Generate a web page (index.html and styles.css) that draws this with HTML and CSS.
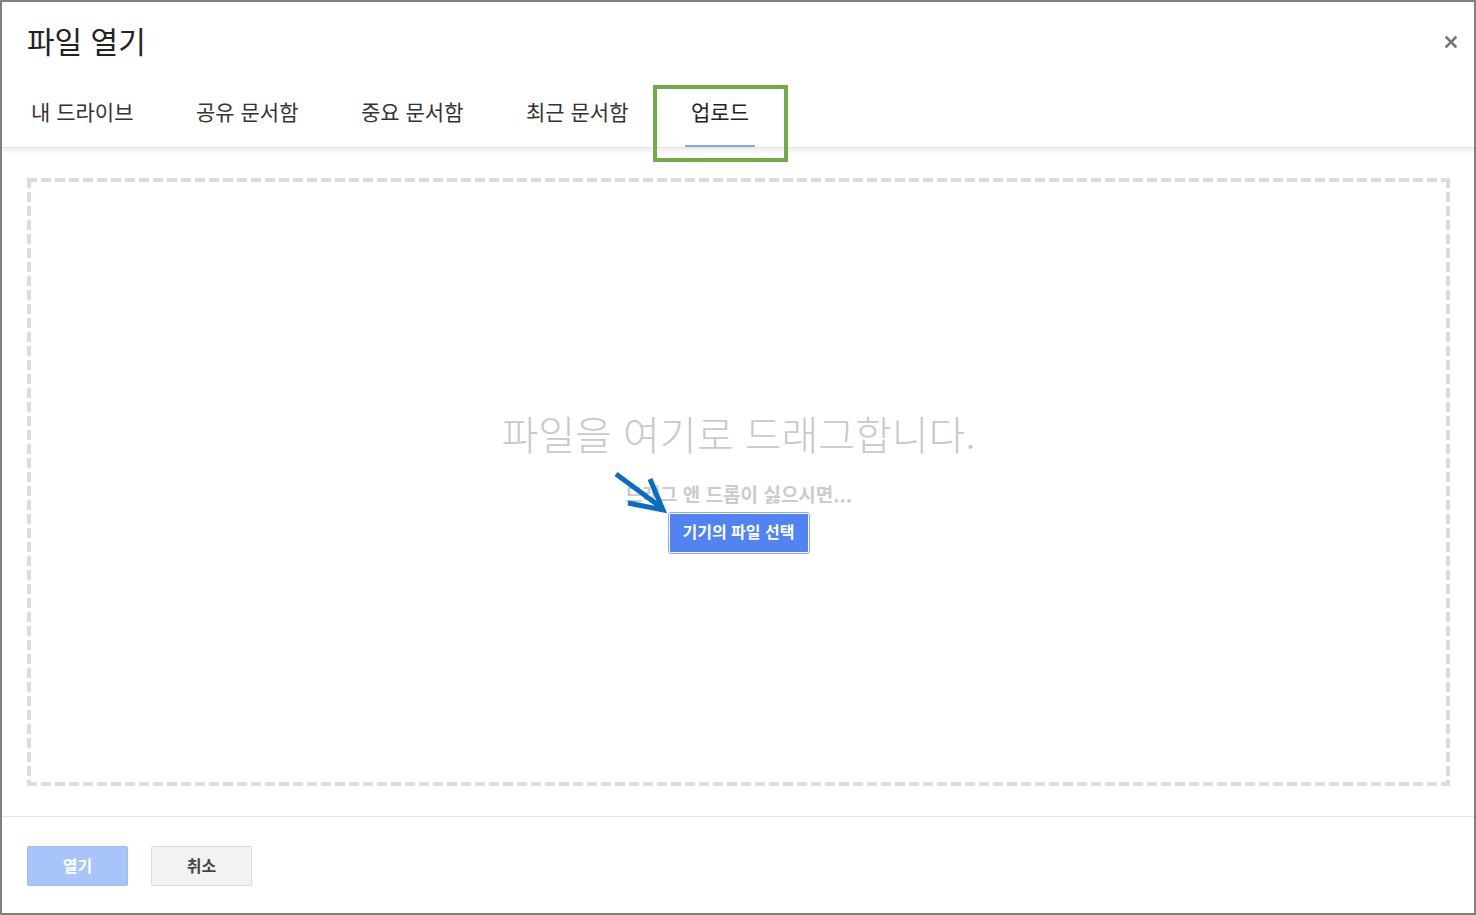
FILE: index.html
```html
<!DOCTYPE html>
<html lang="ko">
<head>
<meta charset="utf-8">
<title>파일 열기</title>
<link rel="stylesheet" href="styles.css">
</head>
<body>
<div class="frame">
  <header class="header">
    <div class="title-row">
      <h1 class="title">파일 열기</h1>
      <svg class="close" width="12" height="12" viewBox="0 0 12 12" aria-label="닫기">
        <path d="M1.5 1.5 L10.5 10.5 M10.5 1.5 L1.5 10.5" stroke="#777" stroke-width="2.6" stroke-linecap="square"/>
      </svg>
    </div>
    <nav class="tabs">
      <div class="tab-cell"><span class="tab">내 드라이브</span></div>
      <div class="tab-cell"><span class="tab">공유 문서함</span></div>
      <div class="tab-cell"><span class="tab">중요 문서함</span></div>
      <div class="tab-cell"><span class="tab">최근 문서함</span></div>
      <div class="tab-cell"><span class="tab active">업로드</span></div>
    </nav>
  </header>
  <main class="content">
    <div class="dropzone">
      <div class="drop-title">파일을 여기로 드래그합니다.</div>
      <div class="drop-sub">드래그 앤 드롭이 싫으시면...</div>
      <button class="pick-btn">기기의 파일 선택</button>
    </div>
  </main>
  <footer class="footer">
    <button class="btn btn-open">열기</button>
    <button class="btn btn-cancel">취소</button>
  </footer>

  <div class="highlight"></div>
  <svg class="arrow" width="70" height="56" viewBox="0 0 70 56">
    <g stroke="#0a6cbf" stroke-width="5" fill="none" stroke-linecap="butt" stroke-linejoin="miter">
      <path d="M11 9 L57 43"/>
      <path d="M45 14 L58 45 L23 38"/>
    </g>
  </svg>
</div>
</body>
</html>
```
FILE: styles.css
```css
* { box-sizing: border-box; }
html, body { margin: 0; padding: 0; background: #fff; }
body {
  font-family: "Noto Sans CJK KR", "Noto Sans", sans-serif;
}
.frame {
  position: relative;
  width: 1476px;
  height: 915px;
  border: 2px solid #808080;
  display: flex;
  flex-direction: column;
  background: #fff;
  overflow: hidden;
}
.header {
  position: relative;
  z-index: 1;
  border-bottom: 1px solid #e3e3e3;
  box-shadow: 0 2px 6px rgba(0,0,0,0.10);
  background: #fff;
}
.title-row {
  display: flex;
  justify-content: space-between;
  align-items: flex-start;
  padding: 18px 17px 0 25px;
  height: 84px;
}
.title {
  margin: 0;
  font-size: 30px;
  font-weight: 400;
  line-height: 40px;
  color: #222;
}
.close {
  margin-top: 16px;
}
.tabs {
  display: grid;
  grid-template-columns: repeat(5, 165px);
  padding-left: 23px;
  height: 61px;
}
.tab-cell { display: flex; align-items: flex-end; }
.tab {
  display: block;
  padding: 13px 6px 22px;
  line-height: 24px;
  font-size: 21px;
  color: #333;
  border-bottom: 2px solid transparent;
}
.tab.active {
  color: #222;
  border-bottom-color: #7fa7f8;
}
.content {
  flex: 0 0 auto;
  padding: 30px 24px 30px 25px;
}
.dropzone {
  height: 608px;
  display: flex;
  flex-direction: column;
  align-items: center;
  justify-content: center;
  background-image:
    repeating-linear-gradient(90deg, #dcdcdc 0 10px, transparent 10px 14px),
    repeating-linear-gradient(90deg, #dcdcdc 0 10px, transparent 10px 14px),
    repeating-linear-gradient(180deg, #dcdcdc 0 10px, transparent 10px 14px),
    repeating-linear-gradient(180deg, #dcdcdc 0 10px, transparent 10px 14px);
  background-size: 100% 4px, 100% 4px, 4px 100%, 4px 100%;
  background-position: 0 0, 0 100%, 0 0, 100% 0;
  background-repeat: no-repeat;
}
.drop-title {
  font-size: 40px;
  font-weight: 300;
  line-height: 46px;
  color: #c9c9c9;
  margin-top: -1px;
}
.drop-sub {
  margin-top: 27px;
  font-size: 19px;
  font-weight: 700;
  line-height: 22px;
  color: #cbcbcb;
}
.pick-btn {
  margin-top: 8px;
  width: 140px;
  height: 40px;
  font-family: inherit;
  font-size: 16px;
  font-weight: 700;
  color: #fff;
  background: #5183f2;
  border: 1px solid #fff;
  outline: 1px solid #8aaaf2;
  border-radius: 2px;
  padding: 0 0 4px;
  line-height: 20px;
}
.footer {
  border-top: 1px solid #e5e5e5;
  padding: 29px 0 0 25px;
  display: flex;
  gap: 23px;
}
.btn {
  width: 101px;
  height: 40px;
  font-family: inherit;
  font-size: 16px;
  font-weight: 700;
  border-radius: 2px;
  padding: 0 0 3px;
  line-height: 20px;
}
.btn-open {
  background: #a9c3fb;
  border: 1px solid #9db9f6;
  color: #fff;
}
.btn-cancel {
  background: #f2f2f2;
  border: 1px solid #dadada;
  color: #444;
}
.highlight {
  position: absolute;
  left: 651px;
  top: 83px;
  width: 135px;
  height: 77px;
  border: 4px solid #70ad47;
  z-index: 3;
  pointer-events: none;
}
.arrow {
  position: absolute;
  left: 603px;
  top: 463px;
  z-index: 3;
}
```
